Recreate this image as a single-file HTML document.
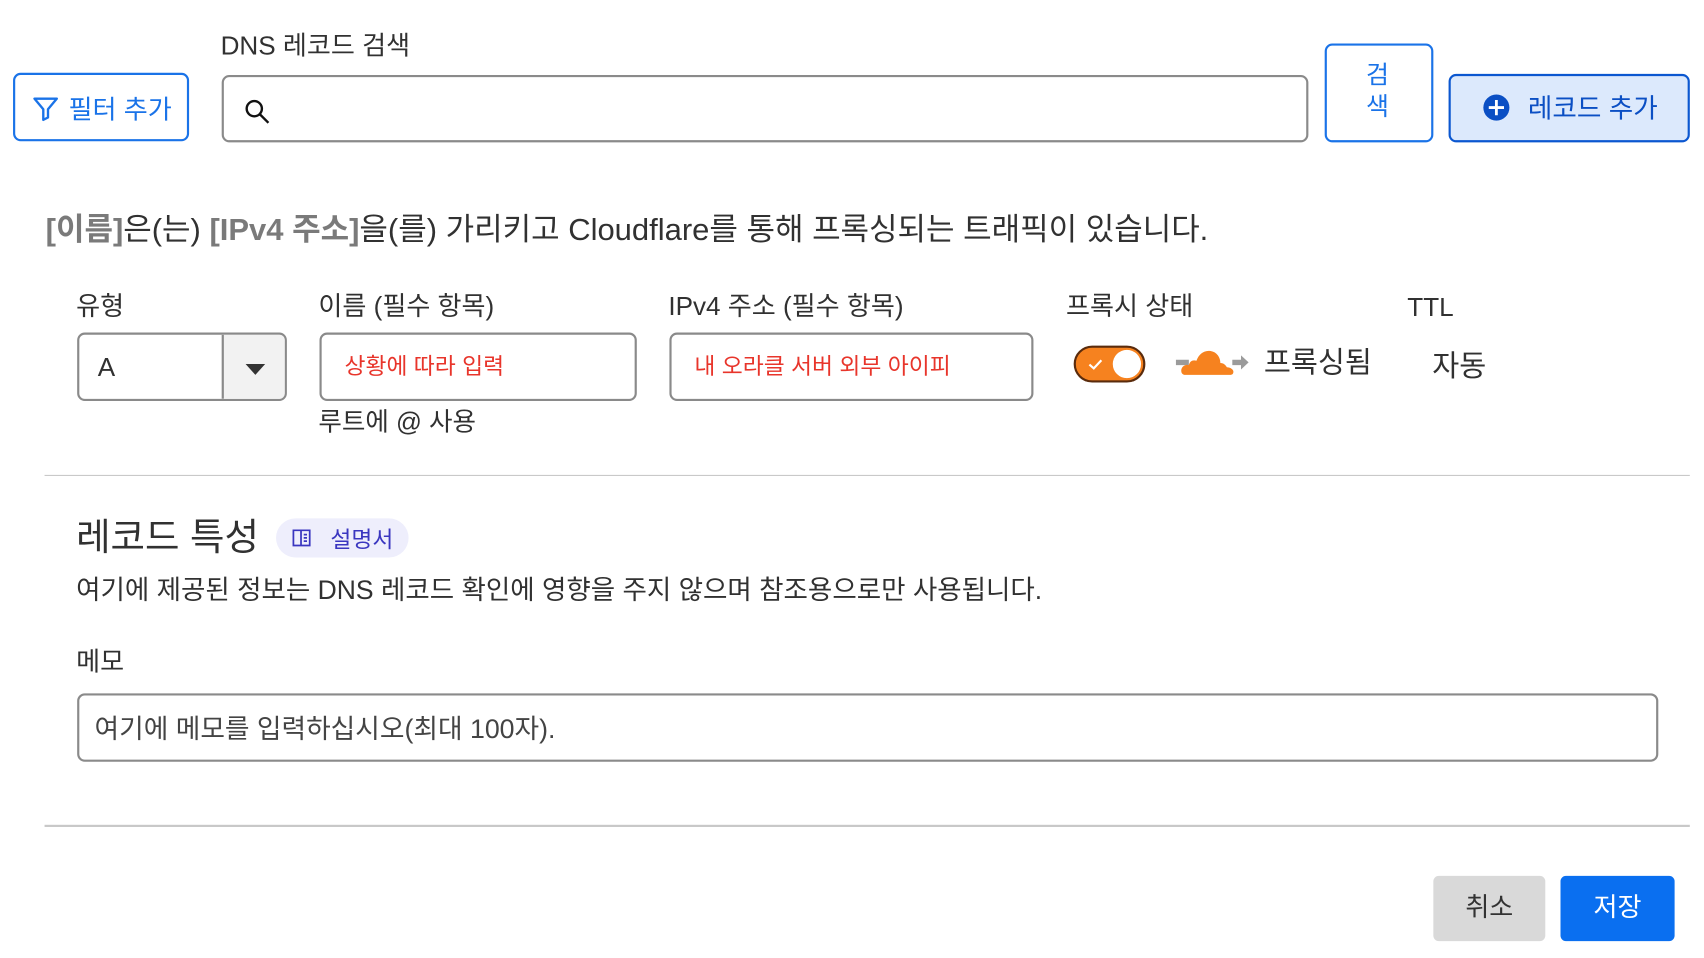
<!DOCTYPE html>
<html><head><meta charset="utf-8"><style>
html,body{margin:0;padding:0;background:#fff;overflow:hidden;width:1704px;height:958px}
#w{position:absolute;left:0;top:0;width:1568px;height:882px;transform:scale(1.0867);transform-origin:0 0;font-family:"Liberation Sans","Noto Sans CJK KR",sans-serif;color:#313131}
.a{position:absolute;white-space:nowrap}
.box{position:absolute;box-sizing:border-box;border:2px solid #8a8a8a;border-radius:7px;background:#fff}
.lbl{font-size:24px;line-height:28px}
.ph{font-size:21px;color:#e8352b;line-height:24px}
</style></head><body><div id="w">
<div class="a lbl" style="left:203px;top:29px">DNS 레코드 검색</div>
<div class="box" style="left:12px;top:67px;width:162px;height:63px;border-color:#1a73e8"></div>
<svg class="a" style="left:29px;top:87px" width="26" height="26" viewBox="0 0 24 24"><path d="M2.5 3.5h19l-7.5 9v7l-4 2v-9z" fill="none" stroke="#1a73e8" stroke-width="2" stroke-linejoin="round"/></svg>
<div class="a" style="left:63px;top:81px;font-size:24px;color:#1a73e8">필터 추가</div>
<div class="box" style="left:204px;top:69px;width:1000px;height:62px"></div>
<svg class="a" style="left:223px;top:89px" width="28" height="28" viewBox="0 0 28 28"><circle cx="11" cy="11" r="7" fill="none" stroke="#111" stroke-width="2.2"/><path d="M16 16l8 8" stroke="#111" stroke-width="2.2"/></svg>
<div class="box" style="left:1219px;top:40px;width:100px;height:91px;border-color:#1a73e8"></div>
<div class="a" style="left:1257px;top:55px;font-size:23px;line-height:29px;color:#1a73e8;text-align:center">검<br>색</div>
<div class="box" style="left:1333px;top:68px;width:222px;height:63px;border-color:#0b57d0;background:#dce9fc"></div>
<svg class="a" style="left:1364px;top:86px" width="26" height="26" viewBox="0 0 26 26"><circle cx="13" cy="13" r="12" fill="#0b4fc4"/><path d="M13 6v14M6 13h14" stroke="#fff" stroke-width="2.6"/></svg>
<div class="a" style="left:1406px;top:81px;font-size:24.5px;color:#0b4fc4">레코드 추가</div>
<div class="a" style="left:42px;top:195px;font-size:28.5px;line-height:34px"><span style="color:#7a7a7a;font-weight:bold">[이름]</span>은(는) <span style="color:#7a7a7a;font-weight:bold">[IPv4 주소]</span>을(를) 가리키고 Cloudflare를 통해 프록싱되는 트래픽이 있습니다.</div>
<div class="a lbl" style="left:70px;top:269px">유형</div>
<div class="a lbl" style="left:293px;top:269px">이름 (필수 항목)</div>
<div class="a lbl" style="left:615px;top:269px">IPv4 주소 (필수 항목)</div>
<div class="a lbl" style="left:981px;top:269px">프록시 상태</div>
<div class="a lbl" style="left:1295px;top:270px">TTL</div>
<div class="box" style="left:71px;top:306px;width:193px;height:63px;overflow:hidden"><div style="position:absolute;left:131px;top:0;width:60px;height:59px;background:#f2f2f2;border-left:2px solid #8a8a8a"></div><svg style="position:absolute;left:152px;top:26px" width="20" height="12"><path d="M1 1h18l-9 10z" fill="#333"/></svg></div>
<div class="a" style="left:90px;top:325px;font-size:24px">A</div>
<div class="box" style="left:294px;top:306px;width:292px;height:63px"></div>
<div class="a ph" style="left:317px;top:326px">상황에 따라 입력</div>
<div class="box" style="left:616px;top:306px;width:335px;height:63px"></div>
<div class="a ph" style="left:639px;top:326px">내 오라클 서버 외부 아이피</div>
<div class="a" style="left:293px;top:369px;font-size:23.5px">루트에 @ 사용</div>
<div class="a" style="left:988px;top:318px;width:66px;height:34px;box-sizing:border-box;border:2px solid #5a2b0c;border-radius:17px;background:#f6821f"><svg style="position:absolute;left:11px;top:10px" width="14" height="11"><path d="M1.5 5.5l4 3.5 7-7.5" fill="none" stroke="#fff" stroke-width="2"/></svg><div style="position:absolute;right:2px;top:2px;width:26px;height:26px;border-radius:50%;background:#fff"></div></div>
<svg class="a" style="left:1082px;top:314px" width="68" height="36" viewBox="0 0 68 36"><path d="M0 17h12v5H0zM52 17h8v-4l7 6.5-7 6.5v-4H52z" fill="#9b9b9b"/><path d="M9 31c-3 0-4-2-4-4 0-3 3-6 7-5 1-4 4-5 7-4 2-6 7-10 13-9 6 1 9 6 9 11 3 0 5 2 6 4 3 0 6 2 6 4 0 2-1 3-3 3z" fill="#f6821f"/></svg>
<div class="a" style="left:1163px;top:312px;font-size:27px">프록싱됨</div>
<div class="a" style="left:1318px;top:315px;font-size:27px">자동</div>
<div class="a" style="left:41px;top:437px;width:1514px;height:1px;background:#c8c8c8"></div>
<div class="a" style="left:70px;top:473px;font-size:34.5px;line-height:44px">레코드 특성</div>
<div class="a" style="left:254px;top:477px;width:122px;height:36px;border-radius:18px;background:#eeeefc"></div>
<svg class="a" style="left:268px;top:486px" width="20" height="18" viewBox="0 0 20 18"><path d="M2 2h7v14H2zM9 2h8v14H9zM11.5 6h3M11.5 9h3M11.5 12h3" fill="none" stroke="#3a36c0" stroke-width="1.6"/></svg>
<div class="a" style="left:304px;top:481px;font-size:21px;color:#3a36c0">설명서</div>
<div class="a" style="left:70px;top:524px;font-size:24.4px">여기에 제공된 정보는 DNS 레코드 확인에 영향을 주지 않으며 참조용으로만 사용됩니다.</div>
<div class="a lbl" style="left:70px;top:596px">메모</div>
<div class="box" style="left:71px;top:638px;width:1455px;height:63px"></div>
<div class="a" style="left:87px;top:651px;font-size:24.6px;color:#444">여기에 메모를 입력하십시오(최대 100자).</div>
<div class="a" style="left:41px;top:759px;width:1514px;height:2px;background:#c8c8c8"></div>
<div class="a" style="left:1319px;top:806px;width:103px;height:60px;border-radius:5px;background:#d9d9d9;font-size:24px;line-height:60px;text-align:center;color:#333">취소</div>
<div class="a" style="left:1436px;top:806px;width:105px;height:60px;border-radius:5px;background:#0a6ff0;font-size:24px;line-height:60px;text-align:center;color:#fff">저장</div>
</div></body></html>
